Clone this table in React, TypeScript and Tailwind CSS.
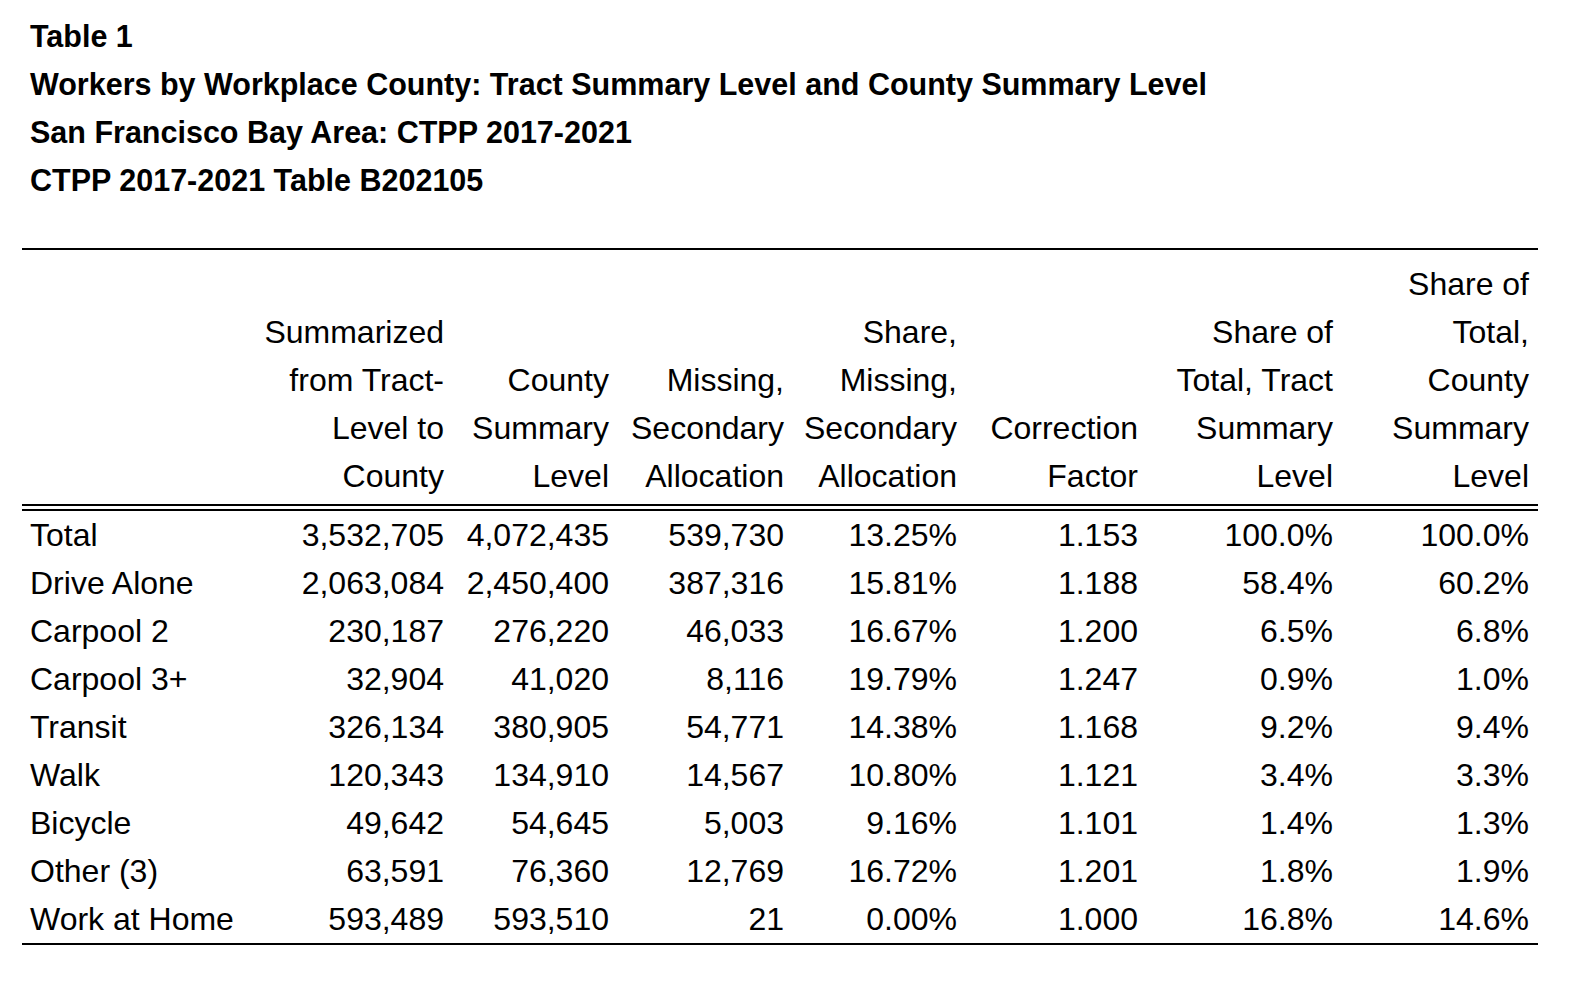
const rows: [string, string, string, string, string, string, string, string][] = [
  ['Total', '3,532,705', '4,072,435', '539,730', '13.25%', '1.153', '100.0%', '100.0%'],
  ['Drive Alone', '2,063,084', '2,450,400', '387,316', '15.81%', '1.188', '58.4%', '60.2%'],
  ['Carpool 2', '230,187', '276,220', '46,033', '16.67%', '1.200', '6.5%', '6.8%'],
  ['Carpool 3+', '32,904', '41,020', '8,116', '19.79%', '1.247', '0.9%', '1.0%'],
  ['Transit', '326,134', '380,905', '54,771', '14.38%', '1.168', '9.2%', '9.4%'],
  ['Walk', '120,343', '134,910', '14,567', '10.80%', '1.121', '3.4%', '3.3%'],
  ['Bicycle', '49,642', '54,645', '5,003', '9.16%', '1.101', '1.4%', '1.3%'],
  ['Other (3)', '63,591', '76,360', '12,769', '16.72%', '1.201', '1.8%', '1.9%'],
  ['Work at Home', '593,489', '593,510', '21', '0.00%', '1.000', '16.8%', '14.6%'],
]

const headers: string[][] = [
  [],
  ['Summarized', 'from Tract-', 'Level to', 'County'],
  ['County', 'Summary', 'Level'],
  ['Missing,', 'Secondary', 'Allocation'],
  ['Share,', 'Missing,', 'Secondary', 'Allocation'],
  ['Correction', 'Factor'],
  ['Share of', 'Total, Tract', 'Summary', 'Level'],
  ['Share of', 'Total,', 'County', 'Summary', 'Level'],
]

const grid = 'grid grid-cols-[240px_191px_165px_175px_173px_181px_195px_196px]'

function App() {
  return (
    <div className="min-h-screen bg-white text-black px-[22px] pt-3" style={{ fontFamily: '"Liberation Sans", Arial, sans-serif' }}>
      {/* Title block */}
      <div className="pl-2 text-[30.5px] font-bold leading-[48px]">
        <div>Table 1</div>
        <div>Workers by Workplace County: Tract Summary Level and County Summary Level</div>
        <div>San Francisco Bay Area: CTPP 2017-2021</div>
        <div>CTPP 2017-2021 Table B202105</div>
      </div>

      {/* Table */}
      <div className="mt-[44px] w-[1516px] border-t-2 border-black border-b-2 text-[32px] leading-[48px]">
        <div className={`${grid} items-end pt-[10px] pb-1 border-b-[7px] border-double border-black`}>
          {headers.map((lines, i) => (
            <div key={i} className={i === 0 ? 'pl-2' : 'pr-[9px] text-right'}>
              {lines.map((l) => (
                <div key={l} className="whitespace-nowrap">{l}</div>
              ))}
            </div>
          ))}
        </div>
        {rows.map((r) => (
          <div key={r[0]} className={grid}>
            {r.map((c, i) => (
              <div key={i} className={i === 0 ? 'pl-2 whitespace-nowrap' : 'pr-[9px] text-right whitespace-nowrap'}>
                {c}
              </div>
            ))}
          </div>
        ))}
      </div>
    </div>
  )
}

export default App
